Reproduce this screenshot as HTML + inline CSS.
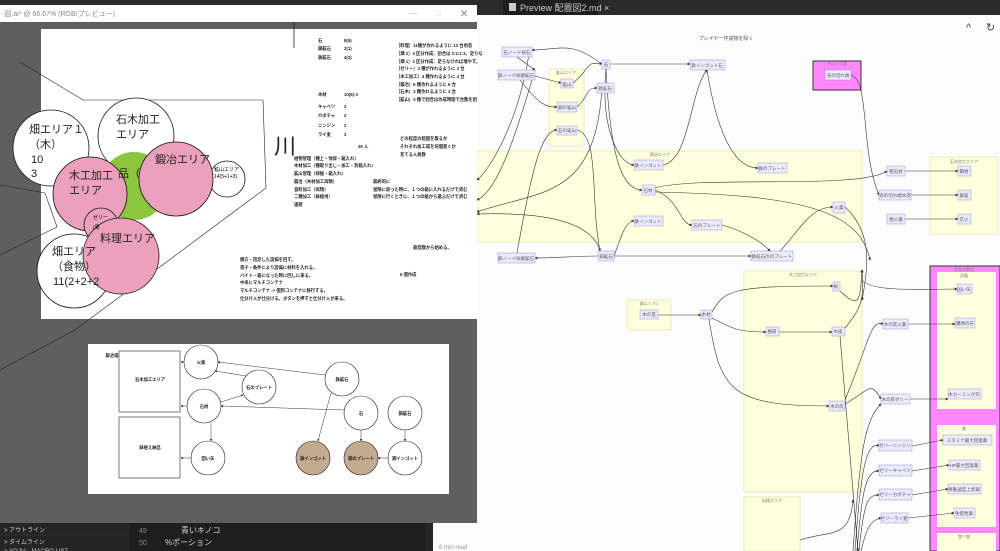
<!DOCTYPE html>
<html><head><meta charset="utf-8">
<style>
html,body{margin:0;padding:0;width:1000px;height:551px;overflow:hidden;background:#fcfcfc;font-family:"Liberation Sans","Noto Sans CJK JP",sans-serif}
svg{position:absolute;left:0;top:0}
</style></head><body>
<svg width="1000" height="551" viewBox="0 0 1000 551" font-family="Liberation Sans, Noto Sans CJK JP, sans-serif">
<defs><marker id="a" markerWidth="5" markerHeight="5" refX="4" refY="2.5" orient="auto"><path d="M0,0L5,2.5L0,5z" fill="#333"/></marker></defs>
<!-- top bar -->
<rect x="0" y="0" width="1000" height="15" fill="#2b2b2b"/>
<rect x="503" y="0" width="95" height="15" fill="#1e1e1e"/>
<rect x="509" y="3" width="7" height="8" fill="#ccc"/>
<text x="520" y="11" font-size="9" fill="#ccc">Preview 配置図2.md  ×</text>
<!-- right preview -->
<rect x="477" y="15" width="523" height="536" fill="#fcfcfc"/>
<text x="966" y="31" font-size="11" fill="#444">^</text>
<text x="986" y="31" font-size="11" fill="#444">↻</text>
<text x="726" y="40" font-size="5" fill="#555" text-anchor="middle">プレイヤー作成物を除く</text>
<g fill="#ffffde" stroke="#dede9a" stroke-width="0.6">
<rect x="549" y="69" width="35" height="77"/>
<rect x="477" y="151" width="385" height="91"/>
<rect x="930" y="157" width="68" height="77"/>
<rect x="744" y="271" width="118" height="221"/>
<rect x="627" y="300" width="44" height="30"/>
<rect x="744" y="497" width="56" height="54"/>
</g>
<rect x="813" y="61" width="48" height="29" fill="#ff88ff" stroke="#333" stroke-width="1"/>
<rect x="930" y="266" width="70" height="285" fill="#ff88ff" stroke="#333" stroke-width="1"/>
<g fill="#ffffde"><rect x="937" y="272" width="59" height="137"/><rect x="937" y="425" width="59" height="102"/><rect x="937" y="533" width="59" height="18"/></g>
<g font-size="4" fill="#777" text-anchor="middle">
<text x="566" y="74">鉱山エリア</text><text x="660" y="156">鋳治エリア</text><text x="964" y="163">石木加工エリア</text>
<text x="803" y="276">木工加工エリア</text><text x="649" y="305">畑エリア1</text><text x="772" y="502">料理エリア</text>
<text x="837" y="65">ドロップ品</text><text x="964" y="271">防具の素材</text><text x="964" y="277">武器</text><text x="964" y="430">薬</text><text x="964" y="538">食べ物</text>
</g>
<!-- edges -->
<g fill="none" stroke="#333" stroke-width="0.6" marker-end="url(#a)">
<path d="M602,64 C570,40 560,50 532,50"/><path d="M517,57 L535,70"/><path d="M535,76 L561,83"/><path d="M520,80 C540,105 545,107 557,107"/>
<path d="M573,83 C590,70 585,60 602,64"/><path d="M577,107 C590,95 585,88 597,88"/><path d="M610,64 L690,64"/>
<path d="M606,69 C600,130 620,165 634,165"/><path d="M663,165 C690,160 690,90 707,70"/><path d="M707,70 C715,120 730,168 758,168"/>
<path d="M606,69 C610,150 620,190 642,190"/><path d="M655,190 C680,200 680,225 692,225"/><path d="M722,225 C740,230 760,240 770,251"/>
<path d="M614,256 C620,240 625,221 634,221"/><path d="M614,256 L751,256"/><path d="M598,256 C570,256 560,258 535,258"/>
<path d="M517,253 C530,180 540,130 557,130"/><path d="M577,130 C600,135 590,200 600,251"/>
<path d="M655,188 C700,175 860,190 887,171"/><path d="M655,192 C800,195 860,210 870,260"/><path d="M780,251 C800,230 810,207 833,207"/>
<path d="M851,75 C870,80 860,150 879,195"/><path d="M905,171 L958,171"/><path d="M911,195 L958,195"/><path d="M905,219 L958,219"/>
<path d="M845,207 C870,230 870,260 862,300"/><path d="M530,47 C520,120 490,170 477,180"/><path d="M535,70 C520,120 500,190 477,200"/>
<path d="M602,88 C595,200 540,190 477,212"/><path d="M600,250 C590,220 540,212 477,214"/>
<path d="M658,315 L701,315"/><path d="M712,312 C725,290 730,286 833,286"/><path d="M712,318 C735,330 740,332 766,332"/>
<path d="M779,332 L832,332"/><path d="M709,319 C720,390 730,406 829,406"/>
<path d="M840,291 C860,310 860,300 862,270"/><path d="M845,328 C860,310 865,300 862,270"/><path d="M845,400 C870,340 870,320 883,324"/>
<path d="M845,404 C870,390 870,380 881,399"/><path d="M908,324 L955,324"/><path d="M910,399 L948,399"/>
<path d="M862,280 C870,290 900,290 957,289"/><path d="M840,336 L858,551"/>
<path d="M912,446 L943,440"/><path d="M912,471 L949,465"/><path d="M912,495 L948,489"/><path d="M908,518 L954,513"/>
<path d="M855,551 C860,480 865,440 879,446"/><path d="M857,551 C862,490 866,470 879,471"/><path d="M859,551 C864,500 868,495 879,495"/>
<path d="M861,551 C866,530 870,520 881,518"/><path d="M853,551 C860,450 865,420 881,404"/><path d="M800,540 C830,530 850,540 853,500"/>
</g>
<g font-size="4.5" fill="#555" text-anchor="middle">
<g fill="#ececff" stroke="#9370db" stroke-width="0.4">
<rect x="502" y="47" width="30" height="10"/><rect x="498" y="70" width="37" height="10"/><rect x="561" y="79" width="12" height="9"/>
<rect x="557" y="102" width="20" height="10"/><rect x="557" y="126" width="20" height="9"/><rect x="602" y="60" width="8" height="9"/>
<rect x="597" y="83" width="17" height="10"/><rect x="690" y="60" width="35" height="10"/><rect x="825" y="70" width="26" height="10"/>
<rect x="634" y="160" width="29" height="10"/><rect x="758" y="163" width="29" height="10"/><rect x="642" y="185" width="13" height="10"/>
<rect x="634" y="216" width="29" height="10"/><rect x="692" y="220" width="30" height="10"/><rect x="598" y="251" width="16" height="10"/>
<rect x="751" y="251" width="42" height="10"/><rect x="498" y="253" width="37" height="10"/><rect x="833" y="202" width="12" height="11"/>
<rect x="887" y="166" width="18" height="10"/><rect x="879" y="190" width="32" height="10"/><rect x="887" y="214" width="18" height="10"/>
<rect x="958" y="166" width="13" height="10"/><rect x="958" y="190" width="13" height="10"/><rect x="958" y="214" width="13" height="10"/>
<rect x="833" y="282" width="7" height="9"/><rect x="640" y="310" width="18" height="9"/><rect x="701" y="310" width="11" height="9"/>
<rect x="766" y="327" width="13" height="9"/><rect x="832" y="327" width="13" height="9"/><rect x="829" y="401" width="16" height="10"/>
<rect x="883" y="319" width="25" height="10"/><rect x="881" y="394" width="29" height="10"/><rect x="879" y="440" width="33" height="11"/>
<rect x="879" y="465" width="33" height="11"/><rect x="879" y="489" width="33" height="11"/><rect x="881" y="513" width="27" height="10"/>
<rect x="957" y="284" width="15" height="10"/><rect x="955" y="318" width="20" height="10"/><rect x="948" y="389" width="33" height="10"/>
<rect x="943" y="435" width="49" height="10"/><rect x="949" y="460" width="31" height="10"/><rect x="948" y="484" width="33" height="10"/><rect x="954" y="508" width="21" height="10"/>
</g>
<text x="517" y="54">石ノード採石</text><text x="516" y="77">銅ノード採掘鉱石</text><text x="567" y="86">鉱山</text>
<text x="567" y="109">銅の鉱山</text><text x="567" y="132">石の鉱山</text><text x="606" y="66">石</text><text x="605" y="90">鉄鉱石</text>
<text x="707" y="67">鉄インゴット石</text><text x="838" y="77">売の切れ端</text><text x="648" y="167">鉄インゴット</text>
<text x="772" y="170">鉄のプレート</text><text x="648" y="192">石材</text><text x="648" y="223">鉄インゴット</text>
<text x="707" y="227">石のプレート</text><text x="606" y="258">銅鉱石</text><text x="772" y="258">鉄鉱石ののプレート</text>
<text x="516" y="260">銅ノード採掘鉱石</text><text x="839" y="209">火薬</text><text x="896" y="173">粗石材</text>
<text x="895" y="197">売の切れ端木炭</text><text x="896" y="221">粗火薬</text><text x="964" y="173">鋼材</text><text x="964" y="197">鉄鉱</text><text x="964" y="221">花火</text>
<text x="836" y="288">板</text><text x="649" y="316">木の苗</text><text x="706" y="316">木材</text><text x="772" y="333">樹皮</text>
<text x="838" y="333">木皮</text><text x="837" y="408">木の灰</text><text x="895" y="326">木の灰火薬</text><text x="895" y="401">木の灰ゼリー</text>
<text x="895" y="447">ゼリーニンジン</text><text x="895" y="472">ゼリーキャベツ</text><text x="895" y="496">ゼリーカボチャ</text><text x="894" y="520">ゼリーライ麦</text>
<text x="964" y="291">固い矢</text><text x="965" y="325">爆弾の矢</text><text x="964" y="396">木カーミング矢</text>
<text x="967" y="442">スタミナ最大回復薬</text><text x="964" y="467">HP最大回復薬</text><text x="964" y="491">移動速度上昇薬</text><text x="964" y="515">免疫性薬</text>
</g>

<!-- left window -->
<rect x="0" y="0" width="477" height="5" fill="#2b2b2b"/>
<rect x="0" y="5" width="477" height="17" fill="#fff"/>
<text x="2" y="16" font-size="7" fill="#888">-図.ai* @ 66.67% (RGB/プレビュー)</text>
<text x="410" y="16" font-size="8" fill="#aaa">—</text><text x="436" y="16" font-size="8" fill="#ccc">□</text><text x="460" y="17" font-size="10" fill="#888">✕</text>
<rect x="0" y="22" width="477" height="501" fill="#5f5f5f"/>
<rect x="41" y="29" width="436" height="290" fill="#fff"/>
<g fill="none" stroke="#222" stroke-width="0.6">
<path d="M20,62 L83,100 L263,100 L266,188 L75,330"/>
<path d="M0,185 L45,193 L57,227 L0,255"/>
<path d="M0,370 L75,330"/>
<line x1="294" y1="22" x2="294" y2="48" stroke-width="0.8"/>
</g>
<circle cx="51" cy="148" r="38" fill="#fff" stroke="#111" stroke-width="0.8"/>
<circle cx="136" cy="136" r="38" fill="#fff" stroke="#111" stroke-width="0.8"/>
<circle cx="134" cy="186" r="34" fill="#8cc63f"/>
<circle cx="227" cy="179" r="18" fill="#fff" stroke="#111" stroke-width="0.8"/>
<circle cx="176" cy="179" r="37" fill="#eba0bb" stroke="#111" stroke-width="0.8"/>
<circle cx="90" cy="194" r="37" fill="#eba0bb" stroke="#111" stroke-width="0.8"/>
<circle cx="74" cy="271" r="37" fill="#fff" stroke="#111" stroke-width="0.8"/>
<circle cx="101" cy="225" r="17" fill="#eba0bb" stroke="#111" stroke-width="0.8"/>
<circle cx="121" cy="256" r="38" fill="#eba0bb" stroke="#111" stroke-width="0.8"/>
<g font-size="11" fill="#222">
<text x="29" y="133">畑エリア１</text><text x="29" y="148">（木）</text><text x="31" y="163">10</text><text x="31" y="177">3</text>
<text x="116" y="123">石木加工</text><text x="116" y="138">エリア</text><text x="155" y="163">鍛冶エリア</text>
<text x="69" y="179">木工加工</text><text x="69" y="194">エリア</text><text x="118" y="177">品（</text>
<text x="100" y="242">料理エリア</text><text x="52" y="255">畑エリア</text><text x="52" y="270">（食物）</text><text x="53" y="285">11(2+2+2</text>
</g>
<text x="93" y="219" font-size="5">ゼリー</text><text x="93" y="229" font-size="5">(果</text>
<text x="214" y="171" font-size="5">鉱山エリア</text><text x="214" y="178" font-size="5">14(5+1+3)</text>
<text x="274" y="154" font-size="22" fill="#222">川</text>
<g font-size="4.3" fill="#222" font-weight="bold">
<text x="318" y="42">石</text><text x="344" y="42">8(5)</text><text x="318" y="50">銅鉱石</text><text x="344" y="50">2(1)</text><text x="318" y="59">鉄鉱石</text><text x="344" y="59">4(3)</text>
<text x="318" y="96">木材</text><text x="344" y="96">10(6)-3</text>
<text x="318" y="108">キャベツ</text><text x="344" y="108">2</text><text x="318" y="117">カボチャ</text><text x="344" y="117">2</text>
<text x="318" y="127">ニンジン</text><text x="344" y="127">2</text><text x="318" y="136">ライ麦</text><text x="344" y="136">3</text>
<text x="358" y="148">26 人</text>
<text x="396" y="47">［料理］11種が作れるように 13 台用意</text><text x="396" y="55">［畑 2］4 区分作成、割合は 2:2:2:3。足りな</text>
<text x="396" y="63">［畑 1］1 区分作成、足らなければ増やす。</text><text x="396" y="70">［ゼリー］3 種が作れるように 3 台</text>
<text x="396" y="78">［木工加工］4 種作れるように 4 台</text><text x="396" y="86">［鍛冶］6 種作れるように 6 台</text>
<text x="396" y="93">［石木］3 種作れるように 3 台</text><text x="396" y="101">［鉱山］3 種で割合は作成時間で台数を割</text>
<text x="400" y="140">どの程度の範囲を取るか</text><text x="400" y="148">それぞれ加工場を何個置くか</text><text x="400" y="156">充てる人員数</text>
<text x="294" y="160">植物管理（種上・伐採・箱入れ）</text><text x="294" y="167">木材加工（種取り出し・加工・別箱入れ）</text>
<text x="294" y="175">鉱山管理（採掘・箱入れ）</text><text x="294" y="183">鍛冶（木材加工両類）</text><text x="294" y="191">食料加工（両類）</text>
<text x="294" y="198">二種加工（鉢植用）</text><text x="294" y="206">運搬</text>
<text x="373" y="183">最終的に</text><text x="373" y="191">冒険に戻った時に、１つの箱に入れるだけで済む</text><text x="373" y="198">冒険に行くときに、１つの箱から選ぶだけで済む</text>
<text x="413" y="249">最低数から始める。</text><text x="400" y="276">6 個作成</text>
<text x="240" y="261">親方・指定した設備を回す。</text><text x="240" y="269">弟子・条件により設備に材料を入れる。</text>
<text x="240" y="277">バイト・箱になった時に回しに来る。</text><text x="240" y="284">中央にマルチコンテナ</text>
<text x="240" y="292">マルチコンテナ -&gt; 個別コンテナに移行する。</text><text x="240" y="300">仕分け人が仕分ける。ボタンを押すと仕分け人が来る。</text>
</g>
<!-- second artboard -->
<rect x="88" y="344" width="361" height="150" fill="#fff"/>
<g fill="#fff" stroke="#222" stroke-width="0.6">
<rect x="119" y="351" width="61" height="61"/><rect x="119" y="417" width="61" height="61"/>
<circle cx="201" cy="362" r="17"/><circle cx="259" cy="387" r="17"/><circle cx="204" cy="406" r="17"/>
<circle cx="342" cy="379" r="17"/><circle cx="361" cy="413" r="17"/><circle cx="405" cy="413" r="17"/>
<circle cx="208" cy="458" r="17"/><circle cx="405" cy="458" r="17"/>
<circle cx="313" cy="458" r="17" fill="#c4aa8f"/><circle cx="361" cy="458" r="17" fill="#c4aa8f"/>
</g>
<g stroke="#333" stroke-width="0.5" marker-end="url(#a)">
<line x1="184" y1="362" x2="181" y2="362"/><line x1="187" y1="406" x2="181" y2="406"/><line x1="191" y1="458" x2="181" y2="458"/>
<line x1="325" y1="375" x2="218" y2="362"/><line x1="246" y1="376" x2="215" y2="371"/><line x1="221" y1="402" x2="243" y2="395"/>
<line x1="344" y1="410" x2="221" y2="406"/><line x1="211" y1="423" x2="211" y2="441"/><line x1="331" y1="393" x2="318" y2="441"/>
<line x1="361" y1="430" x2="361" y2="441"/><line x1="405" y1="430" x2="405" y2="441"/><line x1="388" y1="458" x2="378" y2="458"/>
</g>
<g font-size="4.3" fill="#222" font-weight="bold" text-anchor="middle">
<text x="112" y="357">鍛冶場</text><text x="150" y="381">石木加工エリア</text><text x="150" y="449">鉢植え納品</text>
<text x="201" y="364">火薬</text><text x="259" y="389">石のプレート</text><text x="204" y="408">石材</text><text x="342" y="381">鉄鉱石</text>
<text x="361" y="415">石</text><text x="405" y="415">銅鉱石</text><text x="208" y="460">固い矢</text><text x="313" y="460">鉄インゴット</text>
<text x="361" y="460">銅のプレート</text><text x="405" y="460">銅インゴット</text>
</g>
<!-- bottom vscode -->
<rect x="0" y="523" width="433" height="28" fill="#252526"/>
<rect x="130" y="523" width="295" height="28" fill="#1e1e1e"/>
<rect x="433" y="523" width="44" height="28" fill="#fcfcfc"/>
<line x1="0" y1="535" x2="130" y2="535" stroke="#3a3a3a" stroke-width="0.6"/>
<g font-size="6" fill="#ccc"><text x="4" y="532">&gt; アウトライン</text><text x="4" y="544">&gt; タイムライン</text><text x="4" y="553">&gt; XOJIA - MACRO LIST</text></g>
<g font-size="7" fill="#858585"><text x="139" y="533">49</text><text x="139" y="545">50</text></g>
<g font-size="8" fill="#d4d4d4"><text x="181" y="533">青いキノコ</text><text x="165" y="545">%ポーション</text></g>
<text x="439" y="549" font-size="6" fill="#999">6 min read</text>
</svg>
</body></html>
